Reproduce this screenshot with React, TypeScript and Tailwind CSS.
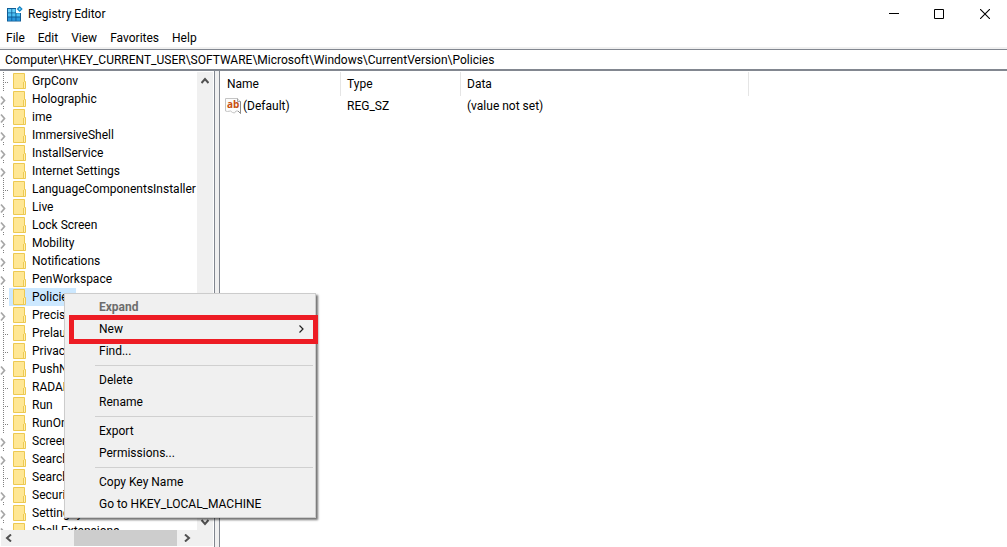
import { useState } from 'react';

/* ── data ── */

interface TreeKey {
    name: string;
    /** has subkeys, so it gets an expander arrow */
    expandable?: boolean;
}

const TREE_KEYS: TreeKey[] = [
    { name: 'GrpConv' },
    { name: 'Holographic', expandable: true },
    { name: 'ime', expandable: true },
    { name: 'ImmersiveShell', expandable: true },
    { name: 'InstallService', expandable: true },
    { name: 'Internet Settings', expandable: true },
    { name: 'LanguageComponentsInstaller' },
    { name: 'Live', expandable: true },
    { name: 'Lock Screen', expandable: true },
    { name: 'Mobility', expandable: true },
    { name: 'Notifications', expandable: true },
    { name: 'PenWorkspace', expandable: true },
    { name: 'Policies' },
    { name: 'Precision', expandable: true },
    { name: 'Prelaunch' },
    { name: 'Privacy' },
    { name: 'PushNotif', expandable: true },
    { name: 'RADAR' },
    { name: 'Run' },
    { name: 'RunOnce' },
    { name: 'Screens', expandable: true },
    { name: 'Search', expandable: true },
    { name: 'Searches' },
    { name: 'Security', expandable: true },
    { name: 'SettingSync', expandable: true },
    { name: 'Shell Extensions', expandable: true },
];

const MENU_BAR = ['File', 'Edit', 'View', 'Favorites', 'Help'];

interface MenuEntry {
    label: string;
    disabled?: boolean;
    submenu?: boolean;
    marked?: boolean;
}

const CONTEXT_GROUPS: MenuEntry[][] = [
    [
        { label: 'Expand', disabled: true },
        { label: 'New', submenu: true, marked: true },
        { label: 'Find...' },
    ],
    [{ label: 'Delete' }, { label: 'Rename' }],
    [{ label: 'Export' }, { label: 'Permissions...' }],
    [{ label: 'Copy Key Name' }, { label: 'Go to HKEY_LOCAL_MACHINE' }],
];

/* ── icons ── */

function RegistryIcon() {
    return (
        <svg className="h-4 w-4" viewBox="0 0 16 16" aria-hidden="true">
            <path d="M0 2h9v5h5v8.500H0z" fill="#0f5c96" />
            <path d="M1 3h3.400v3.400H1zM5.200 3h3.300v3.400H5.200z" fill="#63cdf8" />
            <path d="M1 7.300h3.400v3.300H1zM5.200 7.300h3.300v3.300H5.200zM9.400 7.300H13v3.300H9.400z" fill="#4cc0f4" />
            <path d="M1 11.500h3.400v3.200H1zM5.200 11.500h3.300v3.200H5.200zM9.400 11.500H13v3.200H9.400z" fill="#2a97dc" />
            <path d="m12.700 0 3 3-3 3-3-3z" fill="#1583c4" />
            <path d="m12.700 1.800 1.200 1.200-1.200 1.200-1.200-1.200z" fill="#7fdcff" />
        </svg>
    );
}

function FolderIcon() {
    return (
        <svg className="h-[18px] w-[13px] shrink-0" viewBox="0 0 13 18" aria-hidden="true">
            <path d="M.5 1.5h11v8h1v7H.5z" fill="#ffe794" stroke="#edc951" />
            <path d="M10.500 10v6.500" stroke="#edc951" />
            <path d="M11 10h1v6h-1z" fill="#fff0b5" />
        </svg>
    );
}

function StringValueIcon() {
    return (
        <svg className="h-4 w-4 shrink-0" viewBox="0 0 16 16" aria-hidden="true">
            <path d="M.5.5h12l3 3v12l-2.500-2.500-2 0-1.500 2-2-.5-2-1.500-3 .5-2-.5z" fill="#fcfcfc" stroke="#c4c4c4" />
            <path d="M12.500.5v3h3" fill="#e8e8e8" stroke="#a5a5a5" />
            <path d="M15.500 3.500v12L13 13" fill="none" stroke="#8c8c8c" />
            <text x="2" y="10" className="font-['Open_Sans',sans-serif] text-[10px] font-bold" fill="#c8500f">ab</text>
        </svg>
    );
}

function ArrowIcon({ d }: { d: string }) {
    return (
        <svg className="h-2 w-2" viewBox="0 0 8 8" fill="none" stroke="#505050" strokeWidth="2" aria-hidden="true">
            <path d={d} />
        </svg>
    );
}

/* dotted connector, with the expander arrow over it when the key has subkeys */
function TreeGutter({ expandable }: { expandable?: boolean }) {
    return (
        <svg className="h-[18px] w-[9px] shrink-0" viewBox="0 0 9 18" fill="none" aria-hidden="true">
            {expandable ? (
                <>
                    <path d="M3 0h1v1H3zM3 16h1v1H3z" fill="#808080" />
                    <path d="m1 6.500 3.500 4-3.500 4" stroke="#a6a6a6" strokeWidth="1.700" />
                </>
            ) : (
                <>
                    <path d="M3.500 0v18" stroke="#808080" strokeDasharray="1 1" />
                    <path d="M5 10.500h5" stroke="#808080" strokeDasharray="1 1" />
                </>
            )}
        </svg>
    );
}

/* ── window parts ── */

function TitleBar() {
    return (
        <header className="flex h-7 shrink-0 items-center pl-[7px]">
            <RegistryIcon />
            <h1 className="ml-[5px] flex-1">Registry Editor</h1>
            <button type="button" aria-label="Minimize" className="flex h-full w-[45px] items-center justify-center">
                <svg className="h-[10px] w-[10px]" viewBox="0 0 10 10"><path d="M0 4.500h10" stroke="#000" /></svg>
            </button>
            <button type="button" aria-label="Maximize" className="flex h-full w-[46px] items-center justify-center">
                <svg className="h-[10px] w-[10px]" viewBox="0 0 10 10"><path d="M.5.5h9v9h-9z" fill="none" stroke="#000" /></svg>
            </button>
            <button type="button" aria-label="Close" className="flex h-full w-[45px] items-center justify-center">
                <svg className="h-[10px] w-[10px]" viewBox="0 0 10 10"><path d="m0 0 10 10M10 0 0 10" stroke="#000" strokeWidth="1.100" /></svg>
            </button>
        </header>
    );
}

function KeyTree({ selected, onSelect }: { selected: string; onSelect: (name: string) => void }) {
    return (
        <aside className="flex w-[215px] shrink-0 flex-col border-r border-[#828790] pt-px">
            <div className="flex min-h-0 flex-1">
                <ul className="min-w-0 flex-1 overflow-hidden">
                    {TREE_KEYS.map(key => (
                        <li key={key.name} className="flex h-[18px] whitespace-nowrap">
                            <TreeGutter expandable={key.expandable} />
                            <button
                                type="button"
                                onClick={() => onSelect(key.name)}
                                className={`flex shrink-0 items-center pr-0.5 pl-1 ${key.name === selected ? 'bg-[#cce8ff]' : ''}`}
                            >
                                <FolderIcon />
                                <span className="ml-1.5">{key.name}</span>
                            </button>
                        </li>
                    ))}
                </ul>
                <div className="mr-px flex w-4 shrink-0 flex-col justify-between bg-[#f0f0f0]">
                    <button type="button" aria-label="Scroll up" className="flex h-[17px] items-center justify-center">
                        <ArrowIcon d="m.5 6 3.500-4 3.500 4" />
                    </button>
                    <button type="button" aria-label="Scroll down" className="flex h-[17px] items-center justify-center">
                        <ArrowIcon d="m.5 2 3.500 4 3.500-4" />
                    </button>
                </div>
            </div>
            <div className="mx-px mb-px flex h-4 bg-[#f0f0f0]">
                <button type="button" aria-label="Scroll left" className="flex w-4 items-center justify-center">
                    <ArrowIcon d="m6 .5-4 3.500 4 3.500" />
                </button>
                <div className="flex flex-1 justify-end">
                    <div className="w-[103px] bg-[#cdcdcd]" />
                </div>
                <button type="button" aria-label="Scroll right" className="mr-4 flex w-5 items-center justify-center">
                    <ArrowIcon d="m2 .5 4 3.500-4 3.500" />
                </button>
            </div>
        </aside>
    );
}

function ValueList() {
    return (
        <main className="min-w-0 flex-1 border-l border-[#828790] pt-px">
            <table className="w-full table-fixed border-separate border-spacing-0 text-left">
                <colgroup>
                    <col className="w-[121px]" />
                    <col className="w-[120px]" />
                    <col className="w-[288px]" />
                    <col />
                </colgroup>
                <thead>
                    <tr className="h-6">
                        <th className="border-r border-[#e5e5e5] pl-[7px] font-normal">Name</th>
                        <th className="border-r border-[#e5e5e5] pl-1.5 font-normal">Type</th>
                        <th className="border-r border-[#e5e5e5] pl-1.5 font-normal">Data</th>
                        <td />
                    </tr>
                </thead>
                <tbody>
                    <tr className="h-5">
                        <td className="pl-[5px]">
                            <span className="flex items-center gap-0.5">
                                <StringValueIcon />
                                (Default)
                            </span>
                        </td>
                        <td className="pl-1.5">REG_SZ</td>
                        <td className="pl-1.5">(value not set)</td>
                        <td />
                    </tr>
                </tbody>
            </table>
        </main>
    );
}

function ContextMenu() {
    return (
        <div
            role="menu"
            className="absolute top-[293px] left-16 w-[252px] border border-[#cccccc] bg-[#f0f0f0] py-0.5 shadow-[2px_2px_2px_rgba(0,0,0,0.55)]"
        >
            {CONTEXT_GROUPS.map((group, i) => (
                <div key={i}>
                    {i > 0 && <hr className="my-[3px] mr-0.5 ml-[30px] border-[#d0d0d0]" />}
                    {group.map(entry => (
                        <button
                            key={entry.label}
                            type="button"
                            role="menuitem"
                            disabled={entry.disabled}
                            className={`relative flex h-[22px] w-full items-center justify-between pr-2.5 pl-[34px] ${entry.disabled ? 'font-bold text-[#6d6d6d]' : ''}`}
                        >
                            {entry.label}
                            {entry.submenu && (
                                <svg className="h-2 w-2" viewBox="0 0 8 8" fill="none" stroke="#202020" strokeWidth="1.200">
                                    <path d="m2.500 .5 3.500 3.500-3.500 3.500" />
                                </svg>
                            )}
                            {/* red callout box around the entry to click */}
                            {entry.marked && (
                                <span className="absolute -top-[3px] -right-[3px] -bottom-1 left-1 border-5 border-[#ed1c24]" />
                            )}
                        </button>
                    ))}
                </div>
            ))}
        </div>
    );
}

export default function App() {
    const [selected, setSelected] = useState('Policies');
    const [path, setPath] = useState(
        'Computer\\HKEY_CURRENT_USER\\SOFTWARE\\Microsoft\\Windows\\CurrentVersion\\Policies'
    );

    return (
        <div className="relative flex h-screen flex-col overflow-hidden bg-white font-['Roboto','Noto_Sans',sans-serif] text-xs text-black">
            <TitleBar />
            <nav className="flex h-[21px] shrink-0 items-center gap-px border-b-2 border-[#f0f0f0]">
                {MENU_BAR.map(label => (
                    <button key={label} type="button" className="px-1.5">{label}</button>
                ))}
            </nav>
            <input
                type="text"
                aria-label="Address"
                value={path}
                onChange={e => setPath(e.target.value)}
                className="h-[22px] w-full shrink-0 border-t border-b-2 border-[#828790] px-[5px] outline-none"
            />
            <div className="flex min-h-0 flex-1">
                <KeyTree selected={selected} onSelect={setSelected} />
                <div className="w-1 shrink-0 bg-[#f0f0f0]" />
                <ValueList />
            </div>
            <ContextMenu />
        </div>
    );
}
